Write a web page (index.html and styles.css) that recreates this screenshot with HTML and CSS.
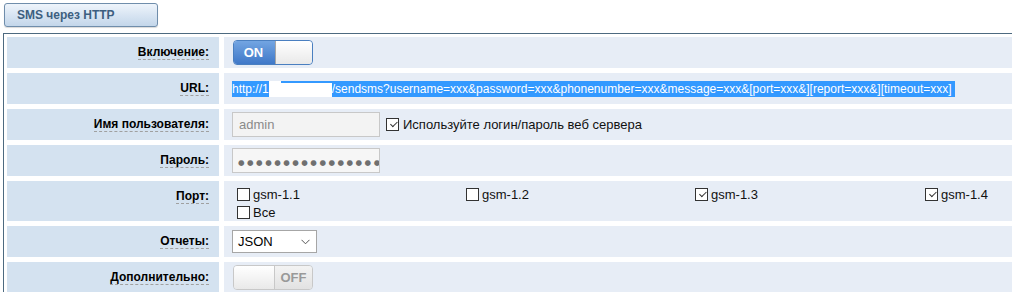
FILE: index.html
```html
<!DOCTYPE html>
<html lang="ru">
<head>
<meta charset="utf-8">
<title>SMS через HTTP</title>
<link rel="stylesheet" href="styles.css">
</head>
<body>
<div class="page">
  <div class="tab">SMS через HTTP</div>
  <div class="panel">
    <div class="row">
      <div class="label"><span>Включение:</span></div>
      <div class="value">
        <div class="toggle on"><span class="side">ON</span><span class="knob"></span></div>
      </div>
    </div>
    <div class="row">
      <div class="label"><span>URL:</span></div>
      <div class="value">
        <span class="sel">http://1<span class="mask"></span>/sendsms?username=xxx&amp;password=xxx&amp;phonenumber=xxx&amp;message=xxx&amp;[port=xxx&amp;][report=xxx&amp;][timeout=xxx]&nbsp;</span>
      </div>
    </div>
    <div class="row">
      <div class="label"><span>Имя пользователя:</span></div>
      <div class="value">
        <div class="input disabled">admin</div>
        <label class="check"><span class="box checked"></span>Используйте логин/пароль веб сервера</label>
      </div>
    </div>
    <div class="row">
      <div class="label"><span>Пароль:</span></div>
      <div class="value">
        <div class="input pass"><span class="dots">&#9679;&#9679;&#9679;&#9679;&#9679;&#9679;&#9679;&#9679;&#9679;&#9679;&#9679;&#9679;&#9679;&#9679;&#9679;&#9679;&#9679;</span></div>
      </div>
    </div>
    <div class="row tall">
      <div class="label top"><span>Порт:</span></div>
      <div class="value ports">
        <label class="check port"><span class="box"></span>gsm-1.1</label>
        <label class="check port"><span class="box"></span>gsm-1.2</label>
        <label class="check port"><span class="box checked"></span>gsm-1.3</label>
        <label class="check port"><span class="box checked"></span>gsm-1.4</label>
        <label class="check port"><span class="box"></span>Все</label>
      </div>
    </div>
    <div class="row">
      <div class="label"><span>Отчеты:</span></div>
      <div class="value">
        <div class="select">JSON<svg class="chev" width="9" height="6" viewBox="0 0 9 6"><path d="M0.5 0.8 L4.5 4.8 L8.5 0.8" fill="none" stroke="#555" stroke-width="1"/></svg></div>
      </div>
    </div>
    <div class="row">
      <div class="label"><span>Дополнительно:</span></div>
      <div class="value">
        <div class="toggle off"><span class="knob"></span><span class="side">OFF</span></div>
      </div>
    </div>
  </div>
</div>
</body>
</html>
```
FILE: styles.css
```css
html, body {
  margin: 0;
  padding: 0;
  background: #ffffff;
}
body {
  font-family: "Liberation Sans", Arial, sans-serif;
  font-size: 12px;
  color: #000;
  overflow: hidden;
}
.page {
  padding: 3px 0 0 3px;
}
.tab {
  box-sizing: border-box;
  width: 154px;
  height: 24px;
  margin-left: 1px;
  padding-left: 12px;
  line-height: 22px;
  font-weight: bold;
  font-size: 12px;
  color: #3d5f80;
  border: 1px solid #6f8dab;
  border-radius: 3px;
  background: linear-gradient(#eef4fb, #c3d6ea);
  box-shadow: 0 1px 1px rgba(0,0,0,0.15);
}
.panel {
  margin-top: 6px;
  border-top: 1px solid #4d6a80;
  border-left: 1px solid #4d6a80;
  padding: 3px 0 0 3px;
  display: flex;
  flex-direction: column;
  gap: 5px;
}
.row {
  display: grid;
  grid-template-columns: 212px 1fr;
  column-gap: 5px;
  height: 31px;
}
.row.tall {
  height: 40px;
}
.label {
  background: #d4e2f0;
  display: flex;
  align-items: center;
  justify-content: flex-end;
  padding-right: 10px;
  font-weight: bold;
}
.label span {
  border-bottom: 1px dashed #a0a0a0;
  line-height: 13px;
}
.label.top {
  align-items: flex-start;
  padding-top: 9px;
  box-sizing: border-box;
}
.value {
  background: #e7edf6;
  display: flex;
  align-items: center;
  padding-left: 8px;
  min-width: 0;
}
.sel {
  background: #3399ff;
  color: #fff;
  font-size: 12px;
  line-height: 16px;
  white-space: pre;
}
.mask {
  display: inline-block;
  width: 63px;
  height: 16px;
  vertical-align: top;
  background: linear-gradient(#3399ff, #3399ff) 12px 0 / 51px 2px no-repeat, #ffffff;
}
.toggle {
  box-sizing: border-box;
  width: 80px;
  height: 25px;
  border: 1px solid #c8c8c8;
  border-radius: 4px;
  display: flex;
  overflow: hidden;
  margin-left: 1px;
  font-weight: bold;
  font-size: 13px;
}
.toggle .side {
  width: 39px;
  display: flex;
  align-items: center;
  justify-content: center;
}
.toggle .knob {
  flex: 1;
  background: linear-gradient(#ffffff, #e9e9e9);
  border-left: 1px solid #c8c8c8;
}
.toggle.on {
  border-color: #4a7fc0;
}
.toggle.on .side {
  background: linear-gradient(#73a5e2, #3f78c8);
  color: #fff;
  padding-right: 2px;
}
.toggle.on .knob {
  border-left: 1px solid #a7a7a7;
  border-radius: 0 3px 3px 0;
}
.toggle.off .knob {
  flex: none;
  width: 40px;
  border-left: none;
  border-right: 1px solid #c8c8c8;
}
.toggle.off .side {
  flex: 1;
  background: linear-gradient(#f3f3f3, #e2e2e2);
  color: #999;
}
.input {
  box-sizing: border-box;
  width: 148px;
  height: 25px;
  border: 1px solid #c8c8c8;
  background: #f3f3f3;
  padding-left: 6px;
  line-height: 23px;
  font-size: 13px;
  color: #8a8a8a;
}
.input.pass {
  background: #f6f6f6;
  color: #707070;
  padding-left: 5px;
  overflow: hidden;
  white-space: nowrap;
}
.dots {
  font-family: "DejaVu Sans", sans-serif;
  font-size: 7.5px;
  letter-spacing: 2.5px;
}
.check {
  display: inline-flex;
  align-items: center;
  font-size: 13px;
  color: #111;
}
.value > .check {
  margin-left: 6px;
}
.box {
  box-sizing: border-box;
  width: 13px;
  height: 13px;
  border: 1px solid #333;
  background: #fff;
  margin-right: 4px;
  position: relative;
  flex: none;
}
.box.checked::after {
  content: "";
  position: absolute;
  left: 2px;
  top: 1px;
  width: 6px;
  height: 3px;
  border-left: 1px solid #333;
  border-bottom: 1px solid #333;
  transform: rotate(-45deg) translate(0px, 2px);
}
.ports {
  display: grid;
  grid-template-columns: 229px 229px 230px auto;
  grid-auto-rows: 18px;
  align-content: start;
  align-items: center;
  padding-top: 4px;
  padding-left: 7px;
}
.port .box {
  margin-right: 3px;
}
.select {
  box-sizing: border-box;
  width: 85px;
  height: 23px;
  border: 1px solid #a6a6a6;
  background: #fff;
  display: flex;
  align-items: center;
  justify-content: space-between;
  padding: 0 6px 0 5px;
  font-size: 13px;
}
.chev {
  display: block;
}
```
